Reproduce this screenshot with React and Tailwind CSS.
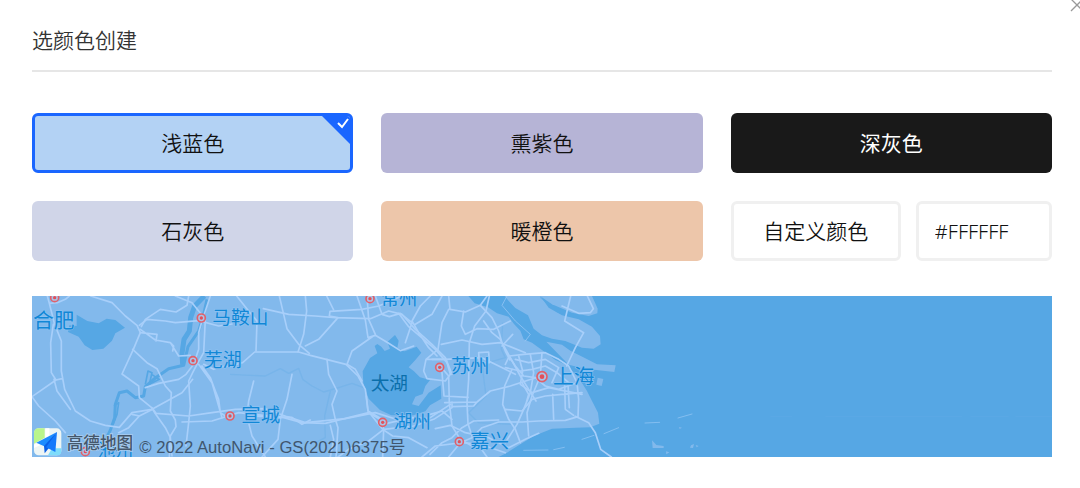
import { useState } from "react";

const swatches = [
  { name: "浅蓝色", tone: "bg-[#b3d2f4] text-[#111] font-[350]" },
  { name: "熏紫色", tone: "bg-[#b6b4d6] text-[#111] font-[350]" },
  { name: "深灰色", tone: "bg-[#191919] text-white font-normal" },
  { name: "石灰色", tone: "bg-[#d0d5e8] text-[#111] font-[350]" },
  { name: "暖橙色", tone: "bg-[#edc6aa] text-[#111] font-[350]" },
];

const cities = [
  { name: "合肥", x: 3, y: 97, dot: [68, 5], size: 62 },
  { name: "马鞍山", x: 541, y: 84, dot: [508, 66], size: 56 },
  { name: "芜湖", x: 515, y: 212, dot: [483, 194], size: 57 },
  { name: "宣城", x: 628, y: 378, dot: [594, 360], size: 58 },
  { name: "池州", x: 196, y: 482, dot: [160, 467], size: 54 },
  { name: "常州", x: 1046, y: 26, dot: [1014, 8], size: 55 },
  { name: "苏州", x: 1257, y: 232, dot: [1223, 214], size: 58 },
  { name: "湖州", x: 1085, y: 396, dot: [1052, 379], size: 56 },
  { name: "嘉兴", x: 1315, y: 455, dot: [1282, 437], size: 58 },
  { name: "上海", x: 1563, y: 264, dot: [1530, 242], size: 62, major: true },
];

function MapView() {
  return (
    <svg
      className="block h-[161px] w-full bg-[#56a7e4] font-['Liberation_Sans','Noto_Sans_CJK_SC',sans-serif]"
      viewBox="0 0 3060 483"
      preserveAspectRatio="xMinYMin slice"
      role="img"
      aria-label="高德地图"
    >
      {/* mainland */}
      <path
        fill="#82b9ec"
        d="M0 0H1309L1328 22 1368 34 1395 52 1430 62 1446 84 1465 104 1475 130 1500 140 1534 165 1570 192 1605 208 1640 245 1665 285 1680 315 1698 350 1702 383 1675 394 1630 395 1560 398 1505 420 1465 445 1425 470 1400 483H0Z"
      />
      {/* estuary islands */}
      <g fill="#82b9ec">
        <path d="M1418 0H1525L1550 35 1590 58 1640 70 1680 92 1704 120 1706 145 1685 158 1650 155 1600 135 1560 128 1530 118 1505 98 1488 58 1450 36 1430 15Z" />
        <path d="M1524 0H1680L1697 38 1696 52 1670 60 1620 50 1560 25Z" />
        <path d="M1543 137 1590 146 1615 164 1654 184 1695 205 1751 208 1747 228 1720 225 1660 218 1610 206 1570 165Z" />
        <path d="M1697 245 1714 249 1709 270 1693 266Z" />
        <path d="M1860 433 1873 447 1895 450 1895 456 1862 456Z" />
        <path d="M1977 448 1986 444 1983 456 1974 455ZM1991 447 2000 450 1994 454ZM1902 466 1912 469 1903 475ZM1941 393 1950 395 1943 399Z" />
      </g>
      <path fill="none" stroke="#56a7e4" strokeWidth="3" opacity=".6" d="M1524 4 1575 48 1640 62 1702 88" />

      {/* lakes */}
      <g fill="#56a7e4">
        <path d="M134 56 166 75 200 82 224 68 250 72 279 95 250 112 240 134 214 158 181 162 158 148 140 122 108 108 112 88 134 90Z" />
        <path d="M1028 150 1036 144 1048 152 1058 165 1074 158 1066 138 1089 117 1100 134 1096 156 1118 166 1154 152 1168 170 1150 192 1130 214 1146 226 1164 244 1194 252 1180 270 1172 294 1150 302 1140 325 1160 330 1190 290 1226 268 1228 308 1194 328 1180 346 1144 358 1078 358 1044 342 1010 308 994 262 992 226 1014 186 1036 172Z" />
      </g>

      {/* Yangtze river */}
      <g fill="none" stroke="#56a7e4" strokeLinejoin="round">
        <path strokeWidth="15" d="M517 0 488 30 476 65 472 105 456 130 450 172 452 206" />
        <path strokeWidth="9" d="M525 10 515 55 500 105 468 152 455 208 410 218 370 246 340 272 335 300 310 305 285 285 262 290 250 325 248 365 236 400 222 430" />
        <path strokeWidth="5" d="M246 330 260 320 255 355 243 385M340 265 348 225 360 230 352 265 382 250 360 236" />
        <path strokeWidth="4" opacity=".25" d="M594 235 700 240 745 218 770 232 800 217 812 250 840 270 875 288 920 275 960 262 995 275M895 285 878 360 880 425 850 440" />
        <path strokeWidth="4" opacity=".25" d="M1412 80 1408 160 1420 185 1350 205 1362 300 1310 350 1340 380 1440 385" />
      </g>

      {/* roads */}
      <g fill="none" stroke="#a8cffa" strokeWidth="5" strokeLinejoin="round" strokeLinecap="round">
        <path d="M46 0 52 22 76 20 100 10 112 0M52 22 68 85 88 135 88 225 98 280 130 345 175 375 220 388 262 394 300 350 360 340 450 290 482 250M64 85 56 140 58 230 72 252 90 248M72 252 0 302 20 330 70 375 100 410M66 250 75 285 115 340" />
        <path d="M176 0 240 20 280 60 315 88 325 110 304 160 270 234 320 270 322 305 358 334 368 350 400 395 415 425 420 480M322 88 345 70 400 75 430 80 500 74 560 90 600 84" />
        <path d="M470 0 465 28 432 48 385 40 340 70 328 92M325 100 370 132 415 140 440 180 475 178M325 110 375 115 372 135M415 140 425 150 422 165" />
        <path d="M302 160 345 200 375 218 400 270 418 290 415 345 430 372 432 392 415 420 412 483M340 275 380 262 440 250 462 235 485 205 500 160 500 110 510 75 525 30 535 0" />
        <path d="M430 0 480 20 520 70 515 170 495 205 482 230 470 255 475 330 470 380 462 450M360 335 372 352 470 360 540 350 610 340 700 338 765 362 820 380 940 368 1030 350 1100 372" />
        <path d="M510 210 535 245 550 285 560 310 565 350 580 360M500 205 540 260 560 330 570 365M515 205 545 220 565 212 594 210 632 200 668 168 800 168 835 178 942 205 978 240 1000 280 1008 345 1052 400 1082 420 1130 425 1185 455" />
        <path d="M300 355 322 360 362 340M322 360 290 395 260 410M450 378 540 375 620 350 755 365 810 380 880 382 1010 350 1065 382 1140 365 1190 368 1255 325" />
        <path d="M614 0 650 45 675 75 672 165M742 0 765 98 800 145 832 172M820 0 824 45 815 115 798 168M820 150 860 130 918 65 892 60 894 46 990 40 1040 30 1110 0" />
        <path d="M694 38 770 55 850 60 910 65 1015 68 1070 45 1110 55 1150 100 1200 145 1240 185 1260 235" />
        <path d="M884 0 905 42M975 0 1000 72 1008 125 1030 118 1070 142 1105 164 1145 150M1030 115 1010 70 1005 0M1024 120 960 165 945 205 970 220 990 255" />
        <path d="M885 190 890 235 915 285 900 325 910 370 918 395 912 483M780 235 765 310 745 370 738 430 690 483M655 360 780 364 810 385 835 372M665 255 650 315 645 360 660 420 700 483" />
        <path d="M1003 300 1008 345 1050 370 1055 400 1052 483M1055 400 1010 435 950 460 918 483M1055 400 1145 390 1205 370 1260 335M895 388 905 430 895 483" />
        <path d="M1030 0 1050 55 1072 62 1105 52 1140 80 1120 140M1195 0 1165 30 1140 75 1160 110 1190 155 1215 180M1100 52 1130 92 1175 130 1210 160 1245 200M1230 0 1200 55 1150 85" />
        <path d="M1250 0 1254 40 1300 48 1345 28 1365 0M1250 40 1230 80 1218 160 1182 190 1175 225 1185 248 1240 255 1255 235 1242 190 1182 190M1228 145 1290 132 1350 145 1405 140 1480 170" />
        <path d="M1372 0 1362 45 1328 90 1312 140 1310 250 1305 320 1308 383 1320 420 1365 483M1295 45 1288 90 1300 115 1335 98 1385 100 1435 75M1355 75 1380 110 1405 130 1420 165 1434 192" />
        <path d="M1345 28 1380 65 1400 105 1410 140 1435 185 1465 240 1490 280 1512 315M1410 150 1442 115M1342 200 1340 170 1370 168 1372 200 1345 200M1200 190 1240 190 1350 185 1420 220 1450 235" />
        <path d="M1220 205 1250 240 1252 320 1260 390 1285 430 1320 450M1230 230 1236 300 1308 304M1238 320 1335 318 1375 285 1435 270 1490 252 1530 240M1260 318 1260 332 1325 330 1335 318" />
        <path d="M1420 205 1432 180 1475 175 1540 170 1580 190 1610 210 1635 260 1640 310 1638 362 1600 373 1520 375 1470 378 1400 378 1350 395 1320 425 1285 440 1250 483" />
        <path d="M1430 180 1450 210 1475 240 1510 245 1540 270 1580 280 1635 260M1420 215 1465 225 1500 220 1540 210 1575 230 1610 260M1460 180 1472 225 1465 265 1500 290 1550 275 1650 295" />
        <path d="M1495 175 1505 230 1495 290 1475 340 1455 385 1420 440M1530 170 1525 240 1500 300 1485 350 1490 420M1470 260 1490 295 1480 330M1450 190 1490 200 1540 190 1580 215 1560 260" />
        <path d="M1440 220 1418 270 1412 325 1430 370 1450 400 1465 440M1420 340 1470 345 1500 310 1540 300 1590 295 1650 290M1562 295 1565 370M1598 265 1600 340 1625 358M1608 265 1612 335" />
        <path d="M1630 361 1670 380 1690 410 1706 460 1738 483M1616 0 1598 75 1655 110 1630 155 1604 210M1590 30 1640 52 1675 50 1684 38 1666 0" />
        <path strokeWidth="3" opacity=".6" d="M1425 0 1410 28 1450 75 1495 115 1480 135" />
        <path d="M1194 475 1230 440 1260 425 1290 395 1325 375 1400 372M1210 398 1255 388 1300 410 1370 425 1430 455 1480 430 1520 412M1195 355 1230 345 1260 370M1170 483 1210 450 1290 440 1345 445 1420 470" />
        <path strokeWidth="3" opacity=".55" d="M1475 463 1548 462M1565 461 1597 454M1650 430 1686 418M1716 413 1760 395M1839 381 1883 379M1938 366 1980 354" />
      </g>
      <path stroke="#6caeea" strokeWidth="2" opacity=".4" d="M2215 361H2280M2380 361H2790M2815 361H2930M2950 361H3060" />

      {/* city markers and names */}
      {cities.map(({ name, x, y, dot, size, major }) => (
        <g key={name}>
          <circle cx={dot[0]} cy={dot[1]} r={major ? 15 : 12} fill="#a8c4e8" stroke="#e1606a" strokeWidth="5" />
          <circle cx={dot[0]} cy={dot[1]} r={major ? 7 : 5} fill="#e1505a" />
          <text x={x} y={y} fontSize={size} fill="#1187d6" stroke="#8cc2f2" strokeWidth="4" paintOrder="stroke">
            {name}
          </text>
        </g>
      ))}
      <text x="1016" y="282" fontSize="56" fill="#0b6fab">太湖</text>

      {/* provider logo */}
      <g>
        <rect x="6" y="397" width="82" height="81" rx="14" fill="#edf5f5" />
        <path fill="#b9f58c" d="M20 397H38V425L6 443V411Q6 397 20 397Z" />
        <path fill="#7edcfb" d="M60 457H88V464Q88 478 74 478H48Z" />
        <path fill="#fff" d="M40 397H52V420L40 427ZM6 446 24 437V448L6 456Z" />
        <path fill="#1c8cff" d="M75 408 13 440 40 452Z" />
        <path fill="#0a5fe6" d="M75 408 36 450 38 472 50 457Z" />
        <path fill="#1479fb" d="M75 408 42 454 70 468Z" />
      </g>
      <text x="104" y="458" fontSize="50" fontWeight="500" fill="#44576c" stroke="#a9cdf0" strokeWidth="5" paintOrder="stroke">高德地图</text>
      <text x="322" y="471" fontSize="50" fill="#40566e">© 2022 AutoNavi - GS(2021)6375号</text>
    </svg>
  );
}

export default function App() {
  const [selected, setSelected] = useState("浅蓝色");
  const [hex, setHex] = useState("#FFFFFF");

  return (
    <main className="relative overflow-hidden bg-white pt-5 pr-7 pb-7 pl-8 font-['Noto_Sans_CJK_SC',sans-serif] text-[21px]">
      <button type="button" aria-label="关闭" className="absolute -top-0.5 -right-1 text-[#999]">
        <svg className="size-3.5" viewBox="0 0 14 14" fill="none" stroke="currentColor" strokeWidth="1.3">
          <path d="M1 1 13 13M13 1 1 13" />
        </svg>
      </button>

      <h1 className="border-b-2 border-[#e6e6e6] pb-3 leading-[38px] font-[350] text-[#333]">选颜色创建</h1>

      <div className="mt-[41px] grid grid-cols-3 gap-7">
        {swatches.map(({ name, tone }) => (
          <button
            key={name}
            type="button"
            aria-pressed={selected === name}
            onClick={() => setSelected(name)}
            className={`relative h-[60px] overflow-hidden rounded-md border-3 ${tone} ${
              selected === name ? "border-[#1a66ff]" : "border-transparent"
            }`}
          >
            {name}
            {selected === name && (
              <svg className="absolute top-0 right-0 size-7" viewBox="0 0 28 28" fill="none">
                <path fill="#1a66ff" d="M0 0H28V28Z" />
                <path stroke="#fff" strokeWidth="2" d="M16 7 20 11 26 3" />
              </svg>
            )}
          </button>
        ))}
        <div className="grid grid-cols-[5fr_4fr] gap-[15px]">
          <button type="button" className="h-[60px] rounded-md border-3 border-[#f0f0f0] font-[350] text-[#111]">
            自定义颜色
          </button>
          <input
            type="text"
            aria-label="自定义颜色值"
            value={hex}
            onChange={(e) => setHex(e.target.value)}
            className="h-[60px] w-full min-w-0 rounded-md border-3 border-[#f0f0f0] px-4 font-['Noto_Sans',sans-serif] text-xl font-light text-[#111]"
          />
        </div>
      </div>

      <div className="mt-[35px]">
        <MapView />
      </div>
    </main>
  );
}
